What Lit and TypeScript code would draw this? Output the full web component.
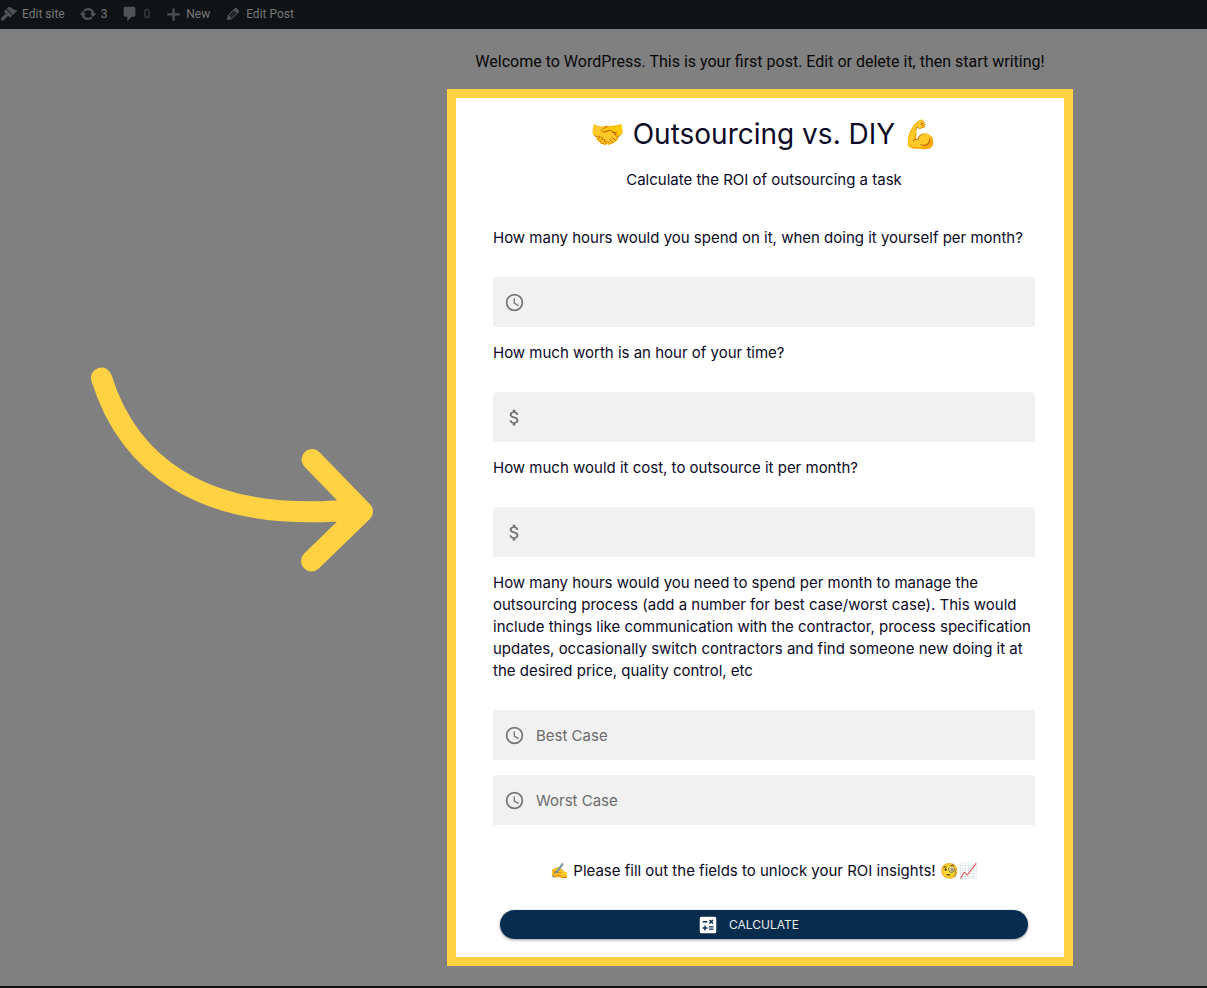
import { LitElement, html, css, svg } from "lit";
import { customElement, property } from "lit/decorators.js";

const clock = svg`<path d="M12 2a10 10 0 1 0 0 20 10 10 0 0 0 0-20zm0 18a8 8 0 1 1 0-16 8 8 0 0 1 0 16zm.5-13H11v6l5.2 3.2.8-1.3-4.5-2.7z"/>`;
const dollar = svg`<path d="M11.8 10.9c-2.27-.59-3-1.2-3-2.15 0-1.09 1.01-1.85 2.7-1.85 1.78 0 2.44.85 2.5 2.1h2.21c-.07-1.72-1.12-3.3-3.21-3.81V3h-3v2.16c-1.94.42-3.5 1.68-3.5 3.61 0 2.31 1.91 3.46 4.7 4.13 2.5.6 3 1.48 3 2.41 0 .69-.49 1.79-2.7 1.79-2.06 0-2.87-.92-2.98-2.1h-2.2c.12 2.19 1.76 3.42 3.68 3.83V21h3v-2.15c1.95-.37 3.5-1.5 3.5-3.55 0-2.84-2.43-3.81-4.7-4.4z"/>`;

@customElement("roi-field")
class RoiField extends LitElement {
  @property() label = "";
  @property() hint = "";
  @property() icon = "clock";

  static styles = css`
    :host { display: block; }
    .question { display: block; line-height: 22px; margin-bottom: 28px; }
    .box {
      display: flex; align-items: center; gap: 11px; height: 50px; padding: 0 11px;
      box-sizing: border-box; background: #f1f1f1; border-radius: 4px 4px 0 0;
    }
    .icon { width: 21px; height: 21px; flex: none; fill: #757575; }
    input {
      flex: 1; min-width: 0; height: 48px; padding: 0; border: 0; outline: 0;
      background: transparent; font: inherit; color: #0b0a26;
    }
    input::placeholder { color: #6b6b6b; opacity: 1; }
  `;

  render() {
    return html`
      ${this.label ? html`<label class="question" for="value">${this.label}</label>` : ""}
      <div class="box">
        <svg class="icon" viewBox="0 0 24 24" aria-hidden="true">${this.icon === "clock" ? clock : dollar}</svg>
        <input id="value" type="text" inputmode="decimal" placeholder=${this.hint} aria-label=${this.label || this.hint} />
      </div>`;
  }
}

@customElement("app-root")
class AppRoot extends LitElement {
  static styles = css`
    :host {
      display: flex; flex-direction: column; min-height: 100vh; box-sizing: border-box;
      background: #808080; border-bottom: 2px solid #0e0e0e; font-family: Roboto, sans-serif;
    }
    .bar {
      display: flex; align-items: center; height: 29px; gap: 14px; padding-bottom: 1px; box-sizing: border-box;
      background: #0f1315; font-size: 12px;
    }
    .bar a { display: flex; align-items: center; gap: 4px; color: #787878; text-decoration: none; }
    .bar svg { width: 18px; height: 18px; fill: #505355; }
    .bar .dim { color: #46494b; }
    .page { flex: 1; display: grid; grid-template-columns: 447fr 626fr 134fr; }
    .pointer { align-self: start; padding: 338px 74px 0 91px; }
    .pointer svg { display: block; width: 100%; }
    .content { padding: 21px 0 20px; }
    .welcome { margin: 0 0 15px; text-align: center; font-size: 16px; line-height: 24px; color: #080808; }
    .card {
      border: 9px solid #ffd243; background: #fff; padding: 17px 29px 18px 37px;
      color: #0b0a26; font-family: Inter, sans-serif; font-size: 15px;
    }
    h1 { margin: 0; text-align: center; font-size: 28px; line-height: 38px; font-weight: 400; }
    .sub { margin: 16px 0 36px; text-align: center; line-height: 22px; }
    .fields { display: grid; gap: 15px; }
    .note { margin: 35px 0 28px; text-align: center; line-height: 22px; }
    button {
      display: flex; align-items: center; justify-content: center; gap: 10px;
      width: calc(100% - 14px); height: 29px; margin: 0 7px; padding: 0 32px 0 0; border: 0; border-radius: 15px;
      background: #082c4e; color: #e8ecf0; font: 12px Inter, sans-serif;
      box-shadow: 0 1px 3px rgba(0, 0, 0, 0.4);
    }
    button svg { width: 22px; height: 22px; fill: #fff; }
  `;

  render() {
    return html`
      <nav class="bar" aria-label="Toolbar">
        <a href="#"><svg viewBox="0 0 20 20"><path d="M14.480 11.060L7.410 3.990l1.500-1.500c.5-.56 2.300-.47 3.510.32 1.210.8 1.430 1.280 2.910 2.100 1.180.64 2.450 1.260 4.450.85zm-.71.71L6.700 4.700 4.930 6.470c-.39.39-.39 1.020 0 1.410l1.060 1.060c.39.39.39 1.030 0 1.420-.6.6-1.430 1.110-2.210 1.690-.35.26-.7.53-1.010.84C1.430 14.230.4 16.080 1.400 17.070c.99 1 2.840-.03 4.180-1.360.31-.31.58-.66.85-1.020.57-.78 1.080-1.610 1.690-2.210.39-.39 1.020-.39 1.410 0l1.060 1.060c.39.39 1.020.39 1.410 0z"/></svg>Edit site</a>
        <a href="#"><svg viewBox="0 0 20 20"><path d="M10.200 3.280c3.530 0 6.430 2.610 6.920 6h2.080l-3.500 4-3.500-4h2.320c-.45-1.970-2.210-3.450-4.320-3.450-1.450 0-2.730.71-3.540 1.780L4.950 5.660C6.230 4.200 8.110 3.280 10.200 3.280zm-.4 13.440c-3.520 0-6.430-2.610-6.920-6H.8l3.500-4c1.170 1.330 2.330 2.670 3.500 4H5.480c.45 1.970 2.210 3.450 4.320 3.450 1.450 0 2.730-.71 3.540-1.780l1.710 1.950c-1.280 1.460-3.150 2.380-5.250 2.380z"/></svg>3</a>
        <a href="#" class="dim"><svg viewBox="0 0 20 20"><path d="M5 2h9c1.100 0 2 .9 2 2v7c0 1.100-.9 2-2 2h-2l-5 5v-5H5c-1.100 0-2-.9-2-2V4c0-1.100.9-2 2-2z"/></svg>0</a>
        <a href="#"><svg viewBox="0 0 16 16"><path d="M7.500 3h2v4.300H14v2H9.500V14h-2V9.300H3v-2h4.500z"/></svg>New</a>
        <a href="#"><svg viewBox="0 0 20 20"><path d="M13.890 3.390l2.710 2.720c.46.460.42 1.240.03 1.640l-8.010 8.020-5.560 1.160 1.160-5.580s7.600-7.630 7.990-8.030c.39-.39 1.220-.39 1.680.07zm-2.730 2.790l-5.590 5.610 1.110 1.110 5.540-5.650zm-2.970 8.230l5.580-5.600-1.070-1.080-5.590 5.600z"/></svg>Edit Post</a>
      </nav>
      <main class="page">
        <div class="pointer">
          <svg viewBox="0 0 282 205" fill="none" stroke="#ffd243" stroke-width="21" stroke-linecap="round" stroke-linejoin="round" aria-hidden="true">
            <path d="M10.500 11C35 90 104 160 269 142M221 92.500L271.500 144.500 220.500 194"/>
          </svg>
        </div>
        <div class="content">
          <p class="welcome">Welcome to WordPress. This is your first post. Edit or delete it, then start writing!</p>
          <form class="card" @submit=${(e: Event) => e.preventDefault()}>
            <h1>🤝 Outsourcing vs. DIY 💪</h1>
            <p class="sub">Calculate the ROI of outsourcing a task</p>
            <div class="fields">
              <roi-field label="How many hours would you spend on it, when doing it yourself per month?"></roi-field>
              <roi-field icon="dollar" label="How much worth is an hour of your time?"></roi-field>
              <roi-field icon="dollar" label="How much would it cost, to outsource it per month?"></roi-field>
              <roi-field hint="Best Case" label="How many hours would you need to spend per month to manage the outsourcing process (add a number for best case/worst case). This would include things like communication with the contractor, process specification updates, occasionally switch contractors and find someone new doing it at the desired price, quality control, etc"></roi-field>
              <roi-field hint="Worst Case"></roi-field>
            </div>
            <p class="note">✍️ Please fill out the fields to unlock your ROI insights! 🧐📈</p>
            <button type="submit">
              <svg viewBox="0 0 24 24" aria-hidden="true"><path fill-rule="evenodd" d="M19 3H5a2 2 0 0 0-2 2v14a2 2 0 0 0 2 2h14a2 2 0 0 0 2-2V5a2 2 0 0 0-2-2zm-5.970 4.060L14.090 6l1.410 1.410L16.910 6l1.060 1.060-1.410 1.410 1.410 1.410-1.060 1.060-1.410-1.400-1.410 1.410-1.060-1.060 1.410-1.410zM6.250 7.720h5v1.500h-5zM11.500 16h-2v2H8v-2H6v-1.500h2v-2h1.500v2h2zm6.500 1.250h-5v-1.500h5zm0-2.500h-5v-1.500h5z"/></svg>
              CALCULATE
            </button>
          </form>
        </div>
      </main>`;
  }
}
